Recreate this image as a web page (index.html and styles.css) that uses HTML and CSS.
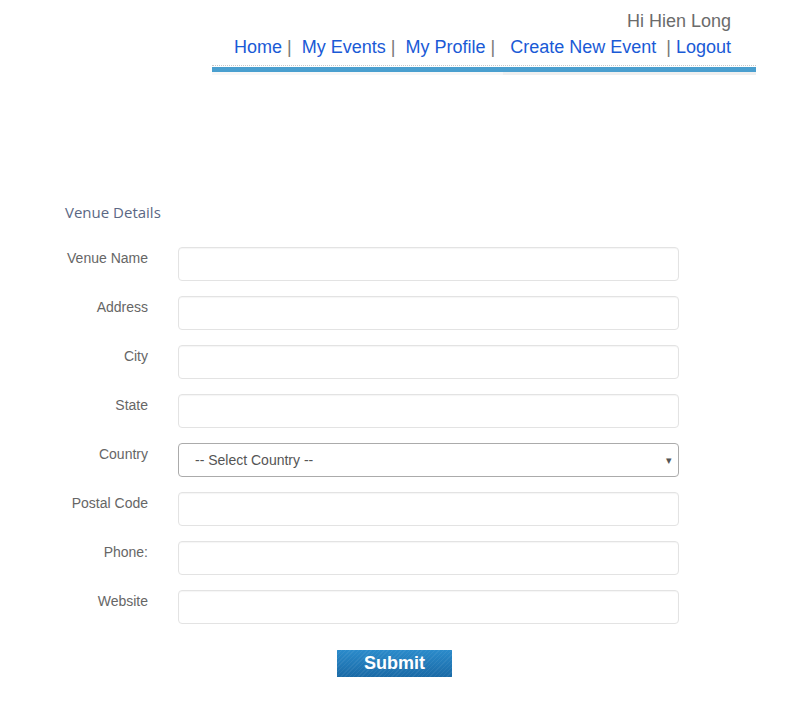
FILE: index.html
```html
<!DOCTYPE html>
<html>
<head>
<meta charset="utf-8">
<link rel="stylesheet" href="styles.css">
</head>
<body>
<div class="header">
  <div class="greeting">Hi Hien Long</div>
  <div class="nav"><a href="#">Home</a><span class="sep">&nbsp;|&nbsp;&nbsp;</span><a href="#">My Events</a><span class="sep">&nbsp;|&nbsp;&nbsp;</span><a href="#">My Profile</a><span class="sep">&nbsp;|&nbsp;&nbsp;&nbsp;</span><a href="#">Create New Event</a><span class="sep">&nbsp;&nbsp;|&nbsp;</span><a href="#">Logout</a></div>
  <div class="rule"></div>
  <div class="bar"></div>
  <div class="shade"></div>
</div>

<div class="section">
  <div class="title">Venue Details</div>
  <div class="form">
    <div class="row"><label class="lbl">Venue Name</label><div class="field"></div></div>
    <div class="row"><label class="lbl">Address</label><div class="field"></div></div>
    <div class="row"><label class="lbl">City</label><div class="field"></div></div>
    <div class="row"><label class="lbl">State</label><div class="field"></div></div>
    <div class="row"><label class="lbl">Country</label><div class="select"><span>-- Select Country --</span><span class="arrow">&#9662;</span></div></div>
    <div class="row"><label class="lbl">Postal Code</label><div class="field"></div></div>
    <div class="row"><label class="lbl">Phone:</label><div class="field"></div></div>
    <div class="row"><label class="lbl">Website</label><div class="field"></div></div>
  </div>
  <div class="actions"><button class="submit">Submit</button></div>
</div>
</body>
</html>
```
FILE: styles.css
```css
body {
  margin: 0;
  background: #fff;
  font-family: "Liberation Sans", Arial, sans-serif;
}
.header {
  margin-left: 212px;
  width: 544px;
  padding-top: 8px;
}
.greeting, .nav {
  font-size: 18px;
  line-height: 26px;
  text-align: right;
  padding-right: 25px;
  white-space: nowrap;
}
.greeting { color: #6b6b6b; }
.nav a { color: #1a5ad6; text-decoration: none; }
.nav .sep { color: #777; }
.rule {
  margin-top: 5px;
  border-top: 1px dotted #c8c8c8;
  height: 1px;
}
.bar {
  height: 5px;
  background: #4a9fcf;
}
.shade {
  height: 3px;
  background: linear-gradient(to right, #f7f7f7 0, #f7f7f7 291px, #efefef 291px, #efefef 100%);
}
.section {
  padding-left: 65px;
  padding-top: 128px;
}
.title {
  font-family: "Open Sans", sans-serif;
  font-size: 15px;
  color: #5b6784;
  line-height: 18px;
  margin-bottom: 26px;
}
.form {
  display: flex;
  flex-direction: column;
  gap: 15px;
}
.row {
  display: flex;
  gap: 30px;
}
.lbl {
  width: 83px;
  text-align: right;
  font-size: 14px;
  line-height: 20px;
  padding-top: 1px;
  color: #666;
  white-space: nowrap;
}
.field {
  width: 499px;
  height: 32px;
  border: 1px solid #e3e3e3;
  border-radius: 4px;
  box-shadow: inset 0 1px 1px rgba(0,0,0,0.04);
  background: #fff;
}
.select {
  height: 32px;
  border: 1px solid #ababab;
  border-radius: 4px;
  display: flex;
  align-items: center;
  justify-content: space-between;
  padding: 0 6px 0 16px;
  box-sizing: content-box;
  width: 477px;
  font-size: 14px;
  color: #555;
}
.arrow { font-size: 11px; color: #555; }
.actions {
  padding-left: 272px;
  padding-top: 26px;
}
.submit {
  width: 115px;
  height: 27px;
  border: none;
  padding: 0;
  color: #fff;
  font-family: "Liberation Sans", Arial, sans-serif;
  font-weight: bold;
  font-size: 18px;
  background:
    repeating-linear-gradient(135deg, rgba(255,255,255,0.06) 0 1px, rgba(255,255,255,0) 1px 3px),
    linear-gradient(to bottom, #2b8bcb, #1a6aa6);
}
```
